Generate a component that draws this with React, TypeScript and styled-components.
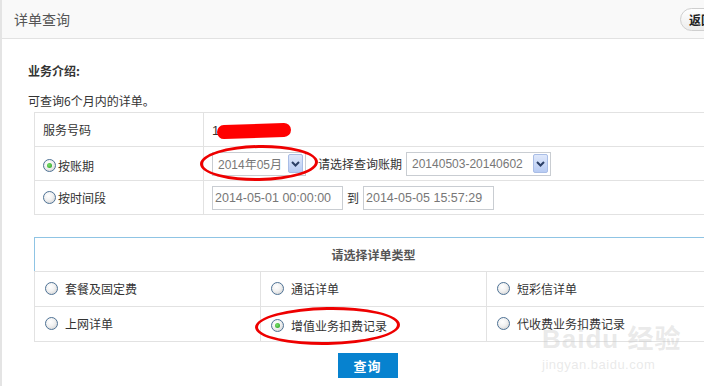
import React from "react";
import styled, { createGlobalStyle } from "styled-components";

const GlobalStyle = createGlobalStyle`
    html, body {
        margin: 0;
        padding: 0;
        background: #fff;
        overflow: hidden;
    }
    body {
        font-family: "Liberation Sans", "Noto Sans CJK SC", sans-serif;
        font-size: 12px;
        color: #333;
    }
`

const Page = styled.div`
    position: relative;
    width: 740px;
    height: 386px;
    border-left: 2px solid #e4e4e4;
    box-sizing: border-box;
`

const Header = styled.div`
    height: 38px;
    background: #f9f9f9;
    border-bottom: 1px solid #e2e2e2;
    display: flex;
    align-items: center;
    justify-content: space-between;
    padding: 0 6px 0 12px;
`

const Title = styled.h2`
    margin: 0;
    font-size: 14px;
    font-weight: normal;
    color: #555;
    font-family: "Noto Sans CJK SC", sans-serif;
`

const BackButton = styled.button`
    height: 23px;
    width: 54px;
    border: 1px solid #cfcfcf;
    border-radius: 12px;
    background: linear-gradient(#ffffff, #ececec);
    font-family: "Noto Sans CJK SC", sans-serif;
    font-size: 12px;
    font-weight: bold;
    color: #222;
    padding: 0 0 0 8px;
    text-align: left;
`

const Content = styled.div`
    padding: 0 0 0 26px;
`

const IntroTitle = styled.div`
    margin-top: 24px;
    height: 16px;
    line-height: 16px;
    font-weight: bold;
    font-family: "Noto Sans CJK SC", sans-serif;
    color: #333;
`

const IntroText = styled.div`
    margin-top: 14px;
    height: 16px;
    line-height: 16px;
    font-family: "Noto Sans CJK SC", sans-serif;
    color: #333;
`

const Table = styled.table<{ $top: number; $accent?: boolean }>`
    margin: ${p => p.$top}px 0 0 6px;
    width: 679px;
    border-collapse: collapse;
    table-layout: fixed;
    td, th {
        border: 1px solid #e2e2e2;
        height: 34px;
        box-sizing: border-box;
        padding: 0 0 0 8px;
        text-align: left;
        vertical-align: middle;
        font-family: "Noto Sans CJK SC", sans-serif;
        font-weight: normal;
        color: #333;
        white-space: nowrap;
    }
    ${p => p.$accent && `
        th {
            border-top-color: #8fc4e4;
            border-left-color: #8fc4e4;
            text-align: center;
            font-weight: bold;
            color: #555;
            padding: 0;
        }
        td {
            height: 35px;
        }
    `}
`

const Inline = styled.div`
    display: flex;
    align-items: center;
    gap: 4px;
`

const RadioLabel = styled.label<{ $gap?: number }>`
    display: inline-flex;
    align-items: center;
    gap: ${p => p.$gap ?? 3}px;
    cursor: pointer;
`

const RadioDot = styled.span<{ $checked?: boolean }>`
    width: 11px;
    height: 11px;
    border-radius: 50%;
    border: 1px solid #4f7396;
    background: radial-gradient(circle at 40% 35%, #ffffff 0%, #f1f1f1 45%, #c9c9c9 100%);
    display: inline-flex;
    align-items: center;
    justify-content: center;
    flex: none;
    &::after {
        content: "";
        display: ${p => (p.$checked ? "block" : "none")};
        width: 5px;
        height: 5px;
        border-radius: 50%;
        background: radial-gradient(circle at 40% 40%, #7ee06b, #1d9a1d);
    }
`

const Masked = styled.span`
    display: inline-flex;
    align-items: center;
    font-family: "Liberation Sans", sans-serif;
    font-size: 13px;
    color: #333;
    &::after {
        content: "";
        display: inline-block;
        width: 74px;
        height: 14px;
        margin-left: -2px;
        background: #ff0000;
        border-radius: 8px;
        transform: rotate(-2deg);
    }
`

const SelectBox = styled.div<{ $width: number }>`
    width: ${p => p.$width}px;
    height: 24px;
    border: 1px solid #c9cdd2;
    box-sizing: border-box;
    display: flex;
    align-items: center;
    justify-content: space-between;
    padding: 0 2px 0 5px;
    font-family: "Liberation Sans", "Noto Sans CJK SC", sans-serif;
    font-size: 12px;
    color: #777;
    background: #fff;
`

const ArrowButton = styled.span`
    width: 15px;
    height: 19px;
    border: 1px solid #a9bde6;
    border-radius: 2px;
    box-sizing: border-box;
    background: linear-gradient(#dfe8fb, #b7cbf3);
    display: flex;
    align-items: center;
    justify-content: center;
`

const DateInput = styled.div`
    width: 131px;
    height: 24px;
    border: 1px solid #c9cdd2;
    box-sizing: border-box;
    display: flex;
    align-items: center;
    padding-left: 2px;
    font-family: "Liberation Sans", sans-serif;
    font-size: 12.5px;
    color: #777;
`

const Actions = styled.div`
    display: flex;
    justify-content: center;
    width: 679px;
    margin: 11px 0 0 0;
`

const QueryButton = styled.button`
    width: 60px;
    height: 25px;
    border: none;
    background: #0782cf;
    color: #fff;
    font-weight: bold;
    font-family: "Noto Sans CJK SC", sans-serif;
    font-size: 13px;
    letter-spacing: 1px;
`

const Ellipse = styled.span<{ $x: number; $y: number; $w: number; $h: number }>`
    position: absolute;
    left: ${p => p.$x}px;
    top: ${p => p.$y}px;
    width: ${p => p.$w}px;
    height: ${p => p.$h}px;
    border: 3px solid #ee0000;
    border-radius: 50%;
    box-sizing: border-box;
    pointer-events: none;
    transform: rotate(-1deg);
`

const Watermark = styled.div`
    position: absolute;
    left: 540px;
    top: 326px;
    color: rgba(200, 200, 200, 0.4);
    font-family: "Liberation Sans", "Noto Sans CJK SC", sans-serif;
    pointer-events: none;
    line-height: 1;
    .brand {
        font-size: 26px;
        font-weight: bold;
        letter-spacing: 1px;
    }
    .site {
        margin-top: 6px;
        font-size: 13px;
        letter-spacing: 0.5px;
    }
`

function Arrow() {
    return (
        <ArrowButton>
            <svg width="9" height="6" viewBox="0 0 9 6">
                <path d="M1 1 L4.5 4.5 L8 1" fill="none" stroke="#2b3f66" strokeWidth="2" />
            </svg>
        </ArrowButton>
    )
}

const detailTypes = [
    ["套餐及固定费", "通话详单", "短彩信详单"],
    ["上网详单", "增值业务扣费记录", "代收费业务扣费记录"],
]

export default function App() {
    return (
        <>
            <GlobalStyle />
            <Page>
                <Header>
                    <Title>详单查询</Title>
                    <BackButton>返回</BackButton>
                </Header>
                <Content>
                    <IntroTitle>业务介绍:</IntroTitle>
                    <IntroText>可查询6个月内的详单。</IntroText>
                    <Table $top={3}>
                        <colgroup>
                            <col style={{ width: 169 }} />
                            <col />
                        </colgroup>
                        <tbody>
                            <tr>
                                <td>服务号码</td>
                                <td><Masked>1</Masked></td>
                            </tr>
                            <tr>
                                <td>
                                    <RadioLabel $gap={2}><RadioDot $checked />按账期</RadioLabel>
                                </td>
                                <td>
                                    <Inline>
                                        <SelectBox $width={94}>2014年05月<Arrow /></SelectBox>
                                        <span style={{ marginLeft: 8 }}>请选择查询账期</span>
                                        <SelectBox $width={145}>20140503-20140602<Arrow /></SelectBox>
                                    </Inline>
                                </td>
                            </tr>
                            <tr>
                                <td>
                                    <RadioLabel $gap={2}><RadioDot />按时间段</RadioLabel>
                                </td>
                                <td>
                                    <Inline>
                                        <DateInput>2014-05-01 00:00:00</DateInput>
                                        <span>到</span>
                                        <DateInput>2014-05-05 15:57:29</DateInput>
                                    </Inline>
                                </td>
                            </tr>
                        </tbody>
                    </Table>
                    <Table $top={22} $accent>
                        <tbody>
                            <tr>
                                <th colSpan={3}>请选择详单类型</th>
                            </tr>
                            {detailTypes.map((row, i) => (
                                <tr key={i}>
                                    {row.map(label => (
                                        <td key={label} style={{ paddingLeft: 10 }}>
                                            <RadioLabel $gap={7}>
                                                <RadioDot $checked={label === "增值业务扣费记录"} />
                                                {label}
                                            </RadioLabel>
                                        </td>
                                    ))}
                                </tr>
                            ))}
                        </tbody>
                    </Table>
                    <Actions>
                        <QueryButton>查询</QueryButton>
                    </Actions>
                </Content>
                <Ellipse $x={198} $y={145} $w={118} $h={36} />
                <Ellipse $x={253} $y={307} $w={145} $h={38} />
                <Watermark>
                    <div className="brand">Baidu 经验</div>
                    <div className="site">jingyan.baidu.com</div>
                </Watermark>
            </Page>
        </>
    )
}
